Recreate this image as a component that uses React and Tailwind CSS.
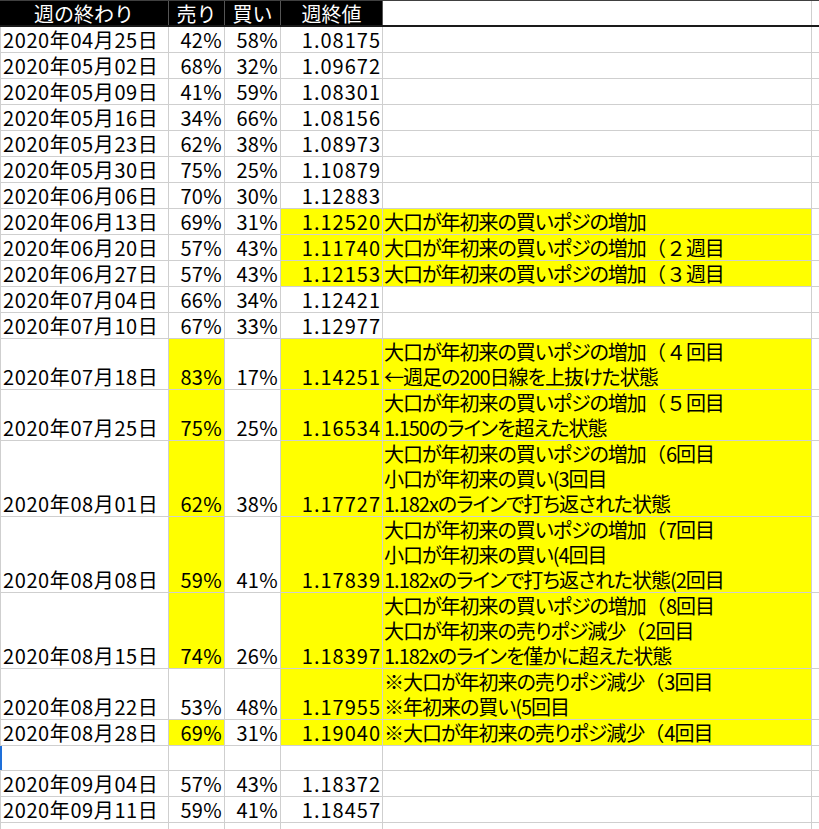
import React from 'react';

const rows = [
  { d: '2020年04月25日', s: '42%', b: '58%', c: '1.08175' },
  { d: '2020年05月02日', s: '68%', b: '32%', c: '1.09672' },
  { d: '2020年05月09日', s: '41%', b: '59%', c: '1.08301' },
  { d: '2020年05月16日', s: '34%', b: '66%', c: '1.08156' },
  { d: '2020年05月23日', s: '62%', b: '38%', c: '1.08973' },
  { d: '2020年05月30日', s: '75%', b: '25%', c: '1.10879' },
  { d: '2020年06月06日', s: '70%', b: '30%', c: '1.12883' },
  { d: '2020年06月13日', s: '69%', b: '31%', c: '1.12520', hl: true, note: ['大口が年初来の買いポジの増加'] },
  { d: '2020年06月20日', s: '57%', b: '43%', c: '1.11740', hl: true, note: ['大口が年初来の買いポジの増加（２週目'] },
  { d: '2020年06月27日', s: '57%', b: '43%', c: '1.12153', hl: true, note: ['大口が年初来の買いポジの増加（３週目'] },
  { d: '2020年07月04日', s: '66%', b: '34%', c: '1.12421' },
  { d: '2020年07月10日', s: '67%', b: '33%', c: '1.12977' },
  {
    d: '2020年07月18日', s: '83%', b: '17%', c: '1.14251', h: 'h-[51px]', hl: true, hs: true,
    note: ['大口が年初来の買いポジの増加（４回目', '←週足の200日線を上抜けた状態'],
  },
  {
    d: '2020年07月25日', s: '75%', b: '25%', c: '1.16534', h: 'h-[51px]', hl: true, hs: true,
    note: ['大口が年初来の買いポジの増加（５回目', '1.150のラインを超えた状態'],
  },
  {
    d: '2020年08月01日', s: '62%', b: '38%', c: '1.17727', h: 'h-[76px]', hl: true, hs: true,
    note: ['大口が年初来の買いポジの増加（6回目', '小口が年初来の買い(3回目', '1.182xのラインで打ち返された状態'],
  },
  {
    d: '2020年08月08日', s: '59%', b: '41%', c: '1.17839', h: 'h-[76px]', hl: true, hs: true,
    note: ['大口が年初来の買いポジの増加（7回目', '小口が年初来の買い(4回目', '1.182xのラインで打ち返された状態(2回目'],
  },
  {
    d: '2020年08月15日', s: '74%', b: '26%', c: '1.18397', h: 'h-[76px]', hl: true, hs: true,
    note: ['大口が年初来の買いポジの増加（8回目', '大口が年初来の売りポジ減少（2回目', '1.182xのラインを僅かに超えた状態'],
  },
  {
    d: '2020年08月22日', s: '53%', b: '48%', c: '1.17955', h: 'h-[51px]', hl: true,
    note: ['※大口が年初来の売りポジ減少（3回目', '※年初来の買い(5回目'],
  },
  { d: '2020年08月28日', s: '69%', b: '31%', c: '1.19040', hl: true, hs: true, note: ['※大口が年初来の売りポジ減少（4回目'] },
  { d: '', s: '', b: '', c: '', h: 'h-[25px]', active: true },
  { d: '2020年09月04日', s: '57%', b: '43%', c: '1.18372' },
  { d: '2020年09月11日', s: '59%', b: '41%', c: '1.18457' },
  { d: '', s: '', b: '', c: '' },
];

const cell = 'shrink-0 flex items-end border-r border-[#cfcfcf]';
const wide = /^[（２３４５]$/;

// proportional kana like the sheet's font, but keep full-width bracket/digits wide
function Note({ text }) {
  const parts = text.split(/([（２３４５])/).filter(Boolean);
  return (
    <span className="whitespace-nowrap tracking-[-1px] [font-feature-settings:'palt']">
      {parts.map((p, i) =>
        wide.test(p) ? (
          <span key={i} className="tracking-normal [font-feature-settings:normal]">{p}</span>
        ) : (
          <React.Fragment key={i}>{p}</React.Fragment>
        )
      )}
    </span>
  );
}

function Row({ r }) {
  const yellow = 'bg-[#ffff00]';
  return (
    <div className={`relative flex border-b border-l border-[#cfcfcf] ${r.h || 'h-[26px]'}`}>
      {r.active && <span className="absolute -left-px top-0 bottom-0 w-[2px] bg-[#1e6fd9]" />}
      <div className={`${cell} w-[168px] pl-[2px] tracking-[0.6px]`}>{r.d}</div>
      <div className={`${cell} w-[56px] justify-end pr-[2px] tracking-[0.3px] ${r.hs ? yellow : ''}`}>{r.s}</div>
      <div className={`${cell} w-[56px] justify-end pr-[2px] tracking-[0.3px]`}>{r.b}</div>
      <div className={`${cell} w-[102px] justify-end pr-[1px] tracking-[1px] ${r.hl ? yellow : ''}`}>{r.c}</div>
      <div className={`${cell} w-[429px] flex-col items-start justify-end pl-[1px] ${r.hl ? yellow : ''}`}>
        {(r.note || []).map((t, i) => (
          <Note key={i} text={t} />
        ))}
      </div>
      <div className="flex-1" />
    </div>
  );
}

export default function App() {
  return (
    <div className="w-[819px] h-[829px] overflow-hidden bg-white text-black text-[20px] leading-[25px] font-['Noto_Sans_CJK_JP','Noto_Sans_CJK_SC',sans-serif]">
      {/* header */}
      <div className="flex h-[27px] border-t border-b-2 border-[#404040] border-b-[#1a1a1a]">
        {[
          ['週の終わり', 'w-[169px]'],
          ['売り', 'w-[56px]'],
          ['買い', 'w-[56px]'],
          ['週終値', 'w-[102px]'],
        ].map(([t, w]) => (
          <div key={t} className={`${w} shrink-0 flex items-center justify-center bg-black text-white border-r border-[#555555]`}>
            {t}
          </div>
        ))}
        <div className="w-[429px] shrink-0 border-r border-[#cfcfcf]" />
        <div className="flex-1" />
      </div>
      {rows.map((r, i) => (
        <Row key={i} r={r} />
      ))}
    </div>
  );
}
